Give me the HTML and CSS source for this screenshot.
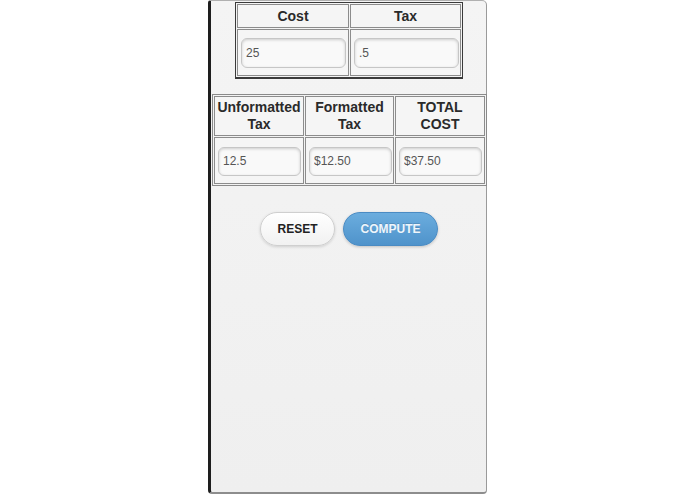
FILE: index.html
```html
<!DOCTYPE html>
<html>
<head>
<meta charset="utf-8">
<link rel="stylesheet" href="styles.css">
</head>
<body>
<div class="panel">
  <table class="grid grid-top">
    <tr class="head-row">
      <th class="c1">Cost</th>
      <th class="c2">Tax</th>
    </tr>
    <tr class="input-row">
      <td><input class="field wide" type="text" value="25"></td>
      <td><input class="field wide" type="text" value=".5"></td>
    </tr>
  </table>

  <table class="grid grid-bottom">
    <tr class="head-row tall">
      <th class="d1">Unformatted<br>Tax</th>
      <th class="d2">Formatted<br>Tax</th>
      <th class="d3">TOTAL<br>COST</th>
    </tr>
    <tr class="input-row">
      <td><input class="field narrow" type="text" value="12.5"></td>
      <td><input class="field narrow" type="text" value="$12.50"></td>
      <td><input class="field narrow" type="text" value="$37.50"></td>
    </tr>
  </table>

  <div class="actions">
    <button class="btn btn-reset">RESET</button>
    <button class="btn btn-compute">COMPUTE</button>
  </div>
</div>
</body>
</html>
```

FILE: styles.css
```css
html, body {
  margin: 0;
  padding: 0;
  background: #ffffff;
}

body {
  font-family: "Liberation Sans", Arial, sans-serif;
}

.panel {
  box-sizing: border-box;
  margin-left: 208px;
  width: 279px;
  height: 494px;
  background: linear-gradient(#f4f4f4, #efefef);
  border-left: 3px solid #1e1e1e;
  border-right: 1px solid #9a9a9a;
  border-top: 1px solid #b0b0b0;
  border-bottom: 2px solid #8d8d8d;
  border-radius: 3px 5px 4px 4px;
  padding-top: 1px;
}

.grid {
  border-collapse: separate;
  border-spacing: 1px;
  table-layout: fixed;
}

.grid th,
.grid td {
  border: 1px solid #8c8c8c;
  background: #f5f5f5;
  padding: 0;
}

.grid th {
  font-weight: bold;
  font-size: 14px;
  color: #2a2a2a;
  text-align: center;
  vertical-align: middle;
  line-height: 17px;
}

.grid-top {
  margin: 0 0 0 24px;
  border: 1px solid #3a3a3a;
  border-bottom-width: 2px;
  width: 228px;
}

.grid-top .c1 { width: 110px; }
.grid-top .c2 { width: 109px; }

.grid-top .head-row th { height: 22px; }
.grid-top .input-row td { height: 45px; }

.grid-bottom {
  margin: 15px 0 0 1px;
  border: 1px solid #8a8a8a;
  width: 274px;
}

.grid-bottom .d1 { width: 88px; }
.grid-bottom .d2 { width: 87px; }
.grid-bottom .d3 { width: 88px; }

.grid-bottom .head-row th { height: 38px; }
.grid-bottom .input-row td { height: 45px; }

.input-row td {
  vertical-align: middle;
}

.field {
  box-sizing: border-box;
  display: block;
  height: 30px;
  border: 1px solid #c6c6c6;
  border-radius: 6px;
  background: #f9f9f9;
  box-shadow: inset 0 1px 3px rgba(0,0,0,0.18);
  font-family: "Liberation Sans", Arial, sans-serif;
  font-size: 12px;
  color: #555;
  padding: 0 4px;
  outline: none;
}

.field.wide {
  width: 105px;
  margin: 1px 0 0 3px;
}

.field.narrow {
  width: 83px;
  height: 29px;
  margin: 1px 0 0 3px;
}

.actions {
  display: flex;
  justify-content: center;
  gap: 8px;
  margin-top: 26px;
  padding-left: 1px;
}

.btn {
  box-sizing: border-box;
  height: 34px;
  border-radius: 17px;
  font-family: "Liberation Sans", Arial, sans-serif;
  font-weight: bold;
  font-size: 12px;
  padding: 0;
  cursor: pointer;
}

.btn-reset {
  width: 75px;
  color: #222;
  background: linear-gradient(#ffffff, #f1f1f1);
  border: 1px solid #cfcfcf;
  box-shadow: 0 1px 3px rgba(0,0,0,0.15);
}

.btn-compute {
  width: 95px;
  color: #eef5fb;
  background: linear-gradient(#6badde, #4f93cb);
  border: 1px solid #4a8bc3;
  box-shadow: 0 1px 3px rgba(0,0,0,0.2);
  text-shadow: 0 -1px 0 rgba(0,0,0,0.15);
}
```
